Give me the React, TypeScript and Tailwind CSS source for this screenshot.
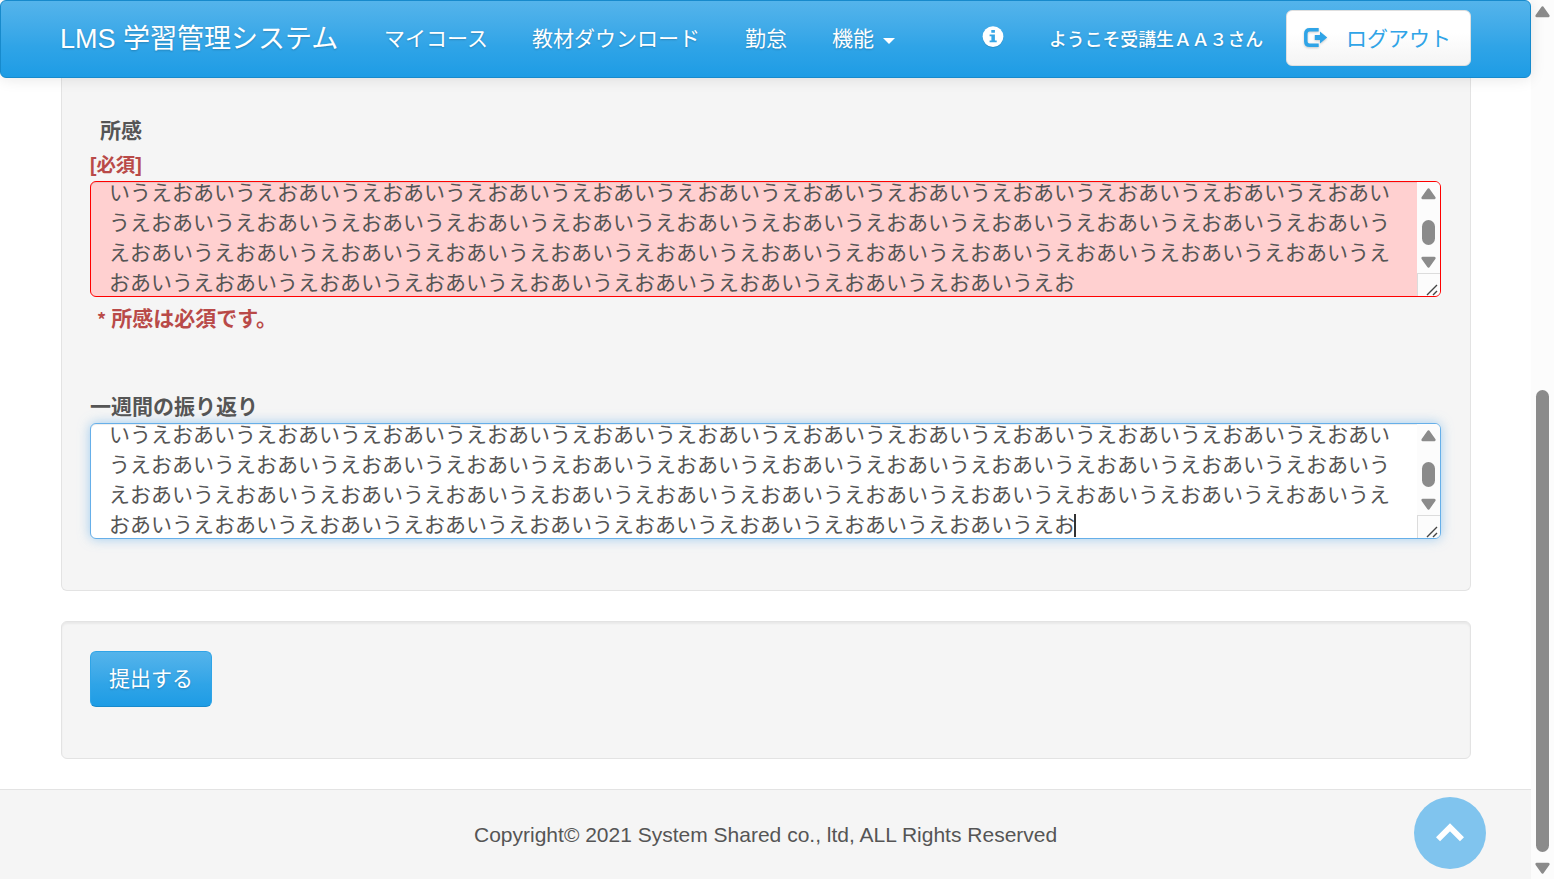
import React from "react";

const LINES = [
  "いうえおあ".repeat(12) + "い",
  "うえおあい".repeat(12) + "う",
  "えおあいう".repeat(12) + "え",
  "おあいうえ".repeat(9) + "お",
];

function ArrowUp() {
  return (
    <svg width="15" height="12" viewBox="0 0 15 12" className="block shrink-0">
      <path d="M7.5 1.7 L13.2 9.9 H1.8 Z" fill="#8b8b8b" stroke="#8b8b8b" strokeWidth="2.8" strokeLinejoin="round" />
    </svg>
  );
}

function ArrowDown() {
  return (
    <svg width="15" height="12" viewBox="0 0 15 12" className="block shrink-0">
      <path d="M7.5 10.3 L13.2 2.1 H1.8 Z" fill="#8b8b8b" stroke="#8b8b8b" strokeWidth="2.8" strokeLinejoin="round" />
    </svg>
  );
}

function ReportField({ variant }: { variant: "error" | "focus" }) {
  const box =
    variant === "error"
      ? "border-[#ff0000] bg-[#ffd0d0] shadow-[inset_0_1px_1px_rgba(0,0,0,0.075)]"
      : "border-[#66afe9] bg-white shadow-[inset_0_1px_1px_rgba(0,0,0,0.075),0_0_12px_rgba(102,175,233,0.6)]";
  return (
    <div className={"flex h-[116px] w-[1351px] overflow-hidden rounded-[6px] border " + box}>
      <div className="-mt-[4px] flex-1 pl-[18px] text-[21px] leading-[30px] whitespace-nowrap">
        {LINES.map((line, i) => (
          <div key={i} className="flex h-[30px] items-center">
            <span>{line}</span>
            {variant === "focus" && i === 3 && <span className="mt-px -ml-px h-[23px] w-[2px] bg-[#333]" />}
          </div>
        ))}
      </div>
      <div className="flex w-[23px] flex-col bg-[#fcfcfc]">
        <div className="flex h-[91px] flex-col items-center pt-[6px] pb-[5px]">
          <ArrowUp />
          <div className="mt-[20px] h-[25px] w-[13px] rounded-full bg-[#8b8b8b]" />
          <div className="mt-auto">
            <ArrowDown />
          </div>
        </div>
        <div className="flex h-[23px] items-end justify-end border-t border-l border-[#dcdcdc] pr-[2px]">
          <svg width="12" height="12" viewBox="0 0 12 12" className="block">
            <path d="M1 11 L11 1 M7 11 L11 7" stroke="#444" strokeWidth="1.4" fill="none" />
          </svg>
        </div>
      </div>
    </div>
  );
}

export default function App() {
  return (
    <div className="flex h-[879px] w-[1554px] overflow-hidden bg-white font-['Liberation_Sans','Noto_Sans_CJK_JP',sans-serif] text-[21px] leading-[30px] text-[#555555]">
      <div className="flex w-[1531px] flex-col">
        <header className="relative z-10 flex h-[78px] shrink-0 rounded-[6px] border border-[#178acc] bg-linear-to-b from-[#54b4eb] via-[#2fa4e7] via-60% to-[#1d9ce5] pl-[59px] whitespace-nowrap text-white shadow-[0_1px_15px_rgba(0,0,0,0.1)] [text-shadow:0_1px_2px_rgba(0,0,0,0.2)]">
          <div className="mt-[23px] w-[324px] shrink-0 text-[27px]">LMS 学習管理システム</div>
          <nav className="mt-[23px] flex shrink-0 items-start">
            <div className="w-[148px]">マイコース</div>
            <div className="w-[213px]">教材ダウンロード</div>
            <div className="w-[87px]">勤怠</div>
            <div className="flex w-[150px] items-center gap-[9px]">
              <span>機能</span>
              <span className="mt-[3px] border-x-[6px] border-t-[6px] border-x-transparent border-t-white" />
            </div>
          </nav>
          <svg width="22" height="24" viewBox="0 0 22 24" className="mt-[25px] mr-[45px] block shrink-0">
            <ellipse cx="11" cy="11.6" rx="10.4" ry="10.4" fill="#000" opacity=".12" />
            <circle cx="11" cy="10.6" r="10.4" fill="#fff" />
            <path d="M9.3 4h3.6v2.8H9.3zM7.6 8.5h5.3v6h1.8v1.8H7.6v-1.8h1.8v-4.2H7.6z" fill="#36a6e6" />
          </svg>
          <div className="mt-[24px] w-[237px] shrink-0 text-[17.85px] font-medium">ようこそ受講生ＡＡ３さん</div>
          <button className="mt-[9px] flex h-[56px] w-[185px] shrink-0 rounded-[6px] border border-[#dfdfdf] bg-linear-to-b from-white from-40% to-[#f4f4f4] pl-[16px] text-[21px] text-[#2fa4e7]">
            <svg width="25" height="24" viewBox="0 0 25 24" className="mt-[16px] mr-[18px] block shrink-0 [filter:drop-shadow(0_1px_1px_rgba(0,0,0,0.2))]">
              <path d="M15.7 2.7H6.6Q2.8 2.7 2.8 6.5V14.5Q2.8 18.3 6.6 18.3H15.7" fill="none" stroke="#2fa4e7" strokeWidth="3.5" />
              <path d="M11.8 8H17V4.6L24.2 10.5L17 16.4V13H11.8Z" fill="#2fa4e7" />
            </svg>
            <span className="mt-[13px]">ログアウト</span>
          </button>
        </header>

        <main className="flex h-[711px] shrink-0 flex-col pl-[61px]">
          <section className="h-[513px] w-[1410px] rounded-b-[6px] border border-t-0 border-[#e3e3e3] bg-[#f5f5f5] pt-[38px] pl-[28px]">
            <div className="pl-[10px] font-bold">所感</div>
            <div className="mt-[4px] text-[19.4px] font-bold text-[#b94a48]">[必須]</div>
            <div className="mt-px">
              <ReportField variant="error" />
            </div>
            <div className="mt-[7px] flex h-[30px] gap-[5px] pl-[7px] font-bold text-[#b94a48]">
              <span className="font-['Noto_Sans_CJK_JP'] text-[18px] leading-[30px]">*</span>
              <span>所感は必須です。</span>
            </div>
            <div className="mt-[58px] font-bold">一週間の振り返り</div>
            <div className="mt-px">
              <ReportField variant="focus" />
            </div>
          </section>
          <section className="mt-[30px] h-[138px] w-[1410px] rounded-[6px] border border-[#e3e3e3] bg-[#f5f5f5] pt-[29px] pl-[28px] shadow-[inset_0_2px_2px_rgba(0,0,0,0.05)]">
            <button className="block h-[56px] w-[122px] rounded-[6px] border border-[#2fa4e7] border-b-[#178acc] bg-linear-to-b from-[#54b4eb] via-[#2fa4e7] via-60% to-[#1d9ce5] text-[21px] text-white [text-shadow:0_1px_2px_rgba(0,0,0,0.2)]">
              提出する
            </button>
          </section>
        </main>

        <footer className="flex h-[90px] shrink-0 border-t border-[#e3e3e3] bg-[#f5f5f5] pl-[474px]">
          <div className="mt-[30px] w-[940px] whitespace-nowrap">Copyright© 2021 System Shared co., ltd, ALL Rights Reserved</div>
          <div className="mt-[7px] flex h-[72px] w-[72px] items-center justify-center rounded-full bg-[#80c4ee]">
            <svg width="28" height="19" viewBox="0 0 28 19" className="-mt-[2px] block">
              <path d="M2 16.3 L14 4.3 L26 16.3" fill="none" stroke="#fff" strokeWidth="5.8" />
            </svg>
          </div>
        </footer>
      </div>

      <div className="flex w-[23px] flex-col items-center bg-[#fcfcfc] pt-[6px] pb-[5px]">
        <ArrowUp />
        <div className="mt-[372px] h-[462px] w-[13px] rounded-full bg-[#8b8b8b]" />
        <div className="mt-auto">
          <ArrowDown />
        </div>
      </div>
    </div>
  );
}
